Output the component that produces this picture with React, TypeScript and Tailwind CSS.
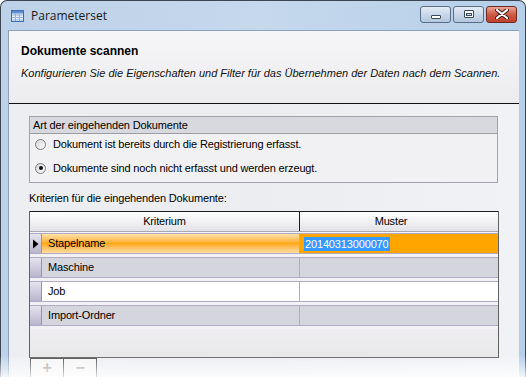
import React from 'react';

const rows = [
  { name: 'Stapelname', value: '20140313000070', kind: 'selected' },
  { name: 'Maschine', value: '', kind: 'gray' },
  { name: 'Job', value: '', kind: 'white' },
  { name: 'Import-Ordner', value: '', kind: 'gray' },
];

const TableIcon = () => (
  <svg width="13" height="12" viewBox="0 0 13 12">
    <rect x="0.5" y="0.5" width="12" height="11" fill="#eaf2fb" stroke="#3d6fb3" />
    <rect x="1" y="1" width="11" height="2.5" fill="#5b8fd0" />
    {[5, 7.5, 10].map((y) => (
      <line key={y} x1="1" x2="12" y1={y} y2={y} stroke="#8fb0d8" />
    ))}
    <line x1="4.5" x2="4.5" y1="3.5" y2="11" stroke="#8fb0d8" />
    <line x1="8.5" x2="8.5" y1="3.5" y2="11" stroke="#8fb0d8" />
  </svg>
);

const Radio = ({ checked }: { checked?: boolean }) => (
  <div className="w-[11px] h-[11px] rounded-full border border-[#7a7a7a] bg-linear-to-br from-[#d4d4d4] to-white flex items-center justify-center shrink-0">
    {checked && <div className="w-[4px] h-[4px] rounded-full bg-[#111]" />}
  </div>
);

export default function App() {
  return (
    <div className="w-[526px] h-[377px] overflow-hidden bg-white relative font-['Liberation_Sans',Arial,sans-serif] text-[11px] text-black">
      <div className="h-[400px] rounded-t-[7px] border border-b-0 border-[#3b4553] bg-linear-to-r from-[#bdd1e8] via-[#c5d8ec] to-[#b6cfe9] flex flex-col">
        {/* Title bar */}
        <div className="h-[29px] flex items-center shrink-0">
          <div className="ml-[10px] mt-[1px]">
            <TableIcon />
          </div>
          <span className="ml-[7px] text-[12px] text-[#1a1a1a] font-['Open_Sans',sans-serif] leading-none">Parameterset</span>
          <div className="ml-auto mr-[8px] mt-[-3px] flex gap-[2px]">
            <div className="w-[31px] h-[17px] rounded-[3px] border border-[#5a6e88] bg-linear-to-b from-[#e4ecf5] via-[#c9d8e9] to-[#b3c7de] flex items-center justify-center">
              <div className="w-[10px] h-[4px] bg-white border border-[#3a4a60] rounded-[1px] mt-[5px]" />
            </div>
            <div className="w-[31px] h-[17px] rounded-[3px] border border-[#5a6e88] bg-linear-to-b from-[#e4ecf5] via-[#c9d8e9] to-[#b3c7de] flex items-center justify-center">
              <div className="w-[10px] h-[8px] bg-white border border-[#3a4a60] rounded-[1px] flex items-center justify-center">
                <div className="w-[6px] h-[3px] bg-[#cad9ea] border border-[#3a4a60]" />
              </div>
            </div>
            <div className="w-[31px] h-[17px] rounded-[3px] border border-[#6a2a20] bg-linear-to-b from-[#e8a595] via-[#cf5a44] to-[#c2402a] flex items-center justify-center">
              <svg width="14" height="10" viewBox="0 0 14 10">
                <path d="M2 1 L12 9 M12 1 L2 9" stroke="#3a1a14" strokeWidth="4" strokeLinecap="round" />
                <path d="M2 1 L12 9 M12 1 L2 9" stroke="#fff" strokeWidth="2.2" strokeLinecap="round" />
              </svg>
            </div>
          </div>
        </div>

        {/* Client area */}
        <div className="ml-[7px] mr-[6px] flex-1 flex flex-col border-l border-t border-[#8aa2c0] bg-linear-to-r from-[#eceef2] via-[#ebedf1] to-[#f0f2f6]">
          {/* Header */}
          <div className="h-[73px] shrink-0 pl-[12px] pt-[12px] bg-linear-to-b from-[#f6f6f8] to-[#ececef] border-b border-[#111]">
            <div className="text-[12px] font-bold leading-[16px]">Dokumente scannen</div>
            <div className="mt-[7px] italic leading-[14px] text-[#111]">
              Konfigurieren Sie die Eigenschaften und Filter für das Übernehmen der Daten nach dem Scannen.
            </div>
          </div>

          {/* Body */}
          <div className="pl-[20px] pt-[12px] flex flex-col tracking-[-0.15px]">
            {/* Group box */}
            <div className="w-[469px] border border-[#a2a2a8] bg-[#f1f1f4]">
              <div className="h-[17px] pl-[3px] flex items-center bg-[#d8d9df] border-b border-[#9c9ca4] leading-none">
                Art der eingehenden Dokumente
              </div>
              <div className="flex flex-col gap-[4px] pb-[4px]">
                <div className="h-[20px] pl-[5px] flex items-center gap-[7px]">
                  <Radio />
                  <span>Dokument ist bereits durch die Registrierung erfasst.</span>
                </div>
                <div className="h-[20px] pl-[5px] flex items-center gap-[7px]">
                  <Radio checked />
                  <span>Dokumente sind noch nicht erfasst und werden erzeugt.</span>
                </div>
              </div>
            </div>

            <div className="mt-[8px] h-[14px] leading-[14px]">Kriterien für die eingehenden Dokumente:</div>

            {/* Grid */}
            <div className="mt-[6px] w-[470px] border-l border-r border-b border-[#626262] bg-[#ebeaed]">
              <div className="h-[21px] flex border-t border-[#1c1c1c] border-b border-b-[#a8a8b0] bg-linear-to-b from-white to-[#e3e3e8]">
                <div className="w-[270px] flex items-center justify-center border-r border-[#1c1c1c]">Kriterium</div>
                <div className="flex-1 flex items-center justify-center pr-[16px]">Muster</div>
              </div>
              <div className="h-[1px] bg-[#f4f3f7]" />
              {rows.map((r) => (
                <div key={r.name} className="h-[24px] flex flex-col">
                  <div className="h-[21px] flex border-t border-b border-[#b3abc4]">
                    <div className="w-[12px] shrink-0 bg-linear-to-b from-[#e6e4ee] to-[#b9b5cc] border-r border-[#9892ad] flex items-center">
                      {r.kind === 'selected' && (
                        <svg width="8" height="10" viewBox="0 0 8 10" className="ml-[2px]">
                          <path d="M1 0.5 L6.5 5 L1 9.5 Z" fill="#000" />
                        </svg>
                      )}
                    </div>
                    <div
                      className={
                        'w-[258px] shrink-0 pl-[6px] flex items-center border-r border-[#b3abc4] ' +
                        (r.kind === 'selected'
                          ? 'bg-linear-to-b from-[#ffe3a6] via-[#ffa80a] to-[#ffdd9e]'
                          : r.kind === 'gray'
                          ? 'bg-[#d5d5dd]'
                          : 'bg-white')
                      }
                    >
                      {r.name}
                    </div>
                    <div
                      className={
                        'flex-1 pl-[4px] flex items-center ' +
                        (r.kind === 'selected' ? 'bg-[#ffa500]' : r.kind === 'gray' ? 'bg-[#d5d5dd]' : 'bg-white')
                      }
                    >
                      {r.value && <span className="bg-[#3399ff] text-white px-[1px] leading-[14px]">{r.value}</span>}
                    </div>
                  </div>
                  <div className="h-[3px] bg-[#f2f1f5]" />
                </div>
              ))}
              <div className="h-[28px] bg-linear-to-b from-[#efedf1] to-[#e8e8e9]" />
            </div>

            {/* Add / remove */}
            <div className="ml-[1px] flex">
              <div className="w-[34px] h-[19px] border-l border-t border-r border-[#4a4a4a] bg-[#f5f5f5] flex items-center justify-center text-[16px] font-bold text-[#9a9a9a] leading-none">+</div>
              <div className="w-[33px] h-[19px] border-t border-r border-[#4a4a4a] bg-[#f5f5f5] flex items-center justify-center text-[16px] font-bold text-[#9a9a9a] leading-none">−</div>
            </div>
          </div>
        </div>
      </div>

      {/* bottom reflection fade */}
      <div className="absolute left-0 right-0 bottom-0 h-[22px] bg-linear-to-b from-white/0 to-white/80 pointer-events-none" />
    </div>
  );
}
